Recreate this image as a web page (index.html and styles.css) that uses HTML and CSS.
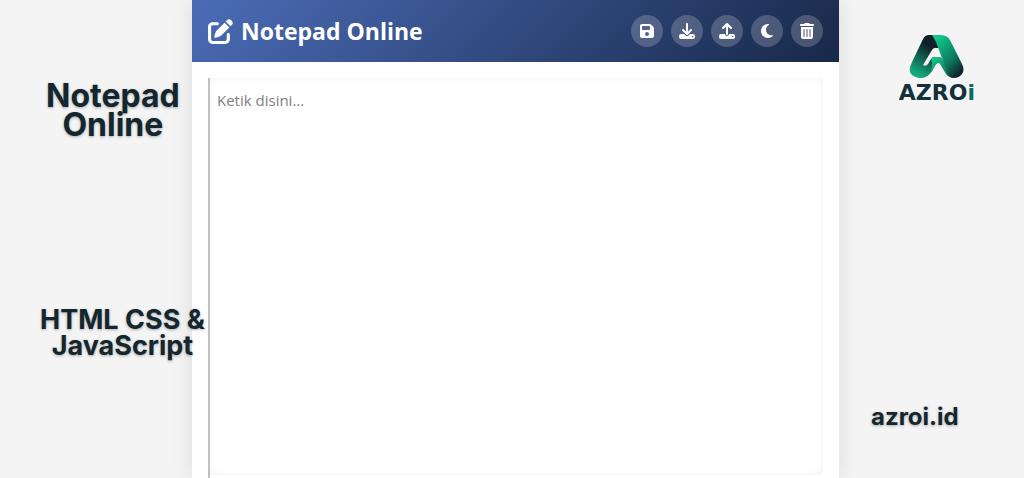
FILE: index.html
```html
<!DOCTYPE html>
<html lang="id">
  <head>
    <meta charset="UTF-8" />
    <meta name="viewport" content="width=device-width, initial-scale=1.0" />
    <title>Notepad Online</title>
    <link rel="stylesheet" href="styles.css">
  </head>
  <body>
    <aside class="side left">
      <p class="label name">Notepad<br>Online</p>
      <p class="label stack">HTML CSS &amp;<br>JavaScript</p>
    </aside>
    <main class="container">
      <header class="header">
        <h1 class="title">
          <svg class="title-icon" viewBox="0 0 512 512" aria-hidden="true"><path d="M471.6 21.7c-21.9-21.9-57.3-21.9-79.2 0L362.3 51.7l97.9 97.9 30.1-30.1c21.9-21.9 21.9-57.3 0-79.2L471.6 21.7zm-299.2 220c-6.1 6.1-10.8 13.6-13.5 21.9l-29.6 88.8c-2.9 8.6-.6 18.1 5.8 24.6s15.9 8.7 24.6 5.8l88.8-29.6c8.2-2.7 15.7-7.4 21.9-13.5L437.7 172.3 339.7 74.3 172.4 241.7zM96 64C43 64 0 107 0 160V416c0 53 43 96 96 96H352c53 0 96-43 96-96V320c0-17.7-14.3-32-32-32s-32 14.3-32 32v96c0 17.7-14.3 32-32 32H96c-17.7 0-32-14.3-32-32V160c0-17.7 14.3-32 32-32h96c17.7 0 32-14.3 32-32s-14.3-32-32-32H96z"/></svg>
          Notepad Online
        </h1>
        <div class="actions">
          <button class="btn" type="button" aria-label="Simpan">
            <svg viewBox="0 0 448 512"><path d="M64 32C28.7 32 0 60.7 0 96V416c0 35.3 28.7 64 64 64H384c35.3 0 64-28.7 64-64V173.3c0-17-6.7-33.3-18.7-45.3L352 50.7C340 38.7 323.7 32 306.7 32H64zm0 96c0-17.7 14.3-32 32-32H288c17.7 0 32 14.3 32 32v64c0 17.7-14.3 32-32 32H96c-17.7 0-32-14.3-32-32V128zM224 288a64 64 0 1 1 0 128 64 64 0 1 1 0-128z"/></svg>
          </button>
          <button class="btn" type="button" aria-label="Unduh">
            <svg viewBox="0 0 512 512"><path d="M288 32c0-17.7-14.3-32-32-32s-32 14.3-32 32V274.7l-73.4-73.4c-12.5-12.5-32.8-12.5-45.3 0s-12.5 32.8 0 45.3l128 128c12.5 12.5 32.8 12.5 45.3 0l128-128c12.5-12.5 12.5-32.8 0-45.3s-32.8-12.5-45.3 0L288 274.7V32zM64 352c-35.3 0-64 28.7-64 64v32c0 35.3 28.7 64 64 64H448c35.3 0 64-28.7 64-64V416c0-35.3-28.7-64-64-64H346.5l-45.3 45.3c-25 25-65.5 25-90.5 0L165.5 352H64zm368 56a24 24 0 1 1 0 48 24 24 0 1 1 0-48z"/></svg>
          </button>
          <button class="btn" type="button" aria-label="Unggah">
            <svg viewBox="0 0 512 512"><path d="M288 109.3V352c0 17.7-14.3 32-32 32s-32-14.3-32-32V109.3l-73.4 73.4c-12.5 12.5-32.8 12.5-45.3 0s-12.5-32.8 0-45.3l128-128c12.5-12.5 32.8-12.5 45.3 0l128 128c12.5 12.5 12.5 32.8 0 45.3s-32.8 12.5-45.3 0L288 109.3zM64 352H192c0 35.3 28.7 64 64 64s64-28.7 64-64H448c35.3 0 64 28.7 64 64v32c0 35.3-28.7 64-64 64H64c-35.3 0-64-28.7-64-64V416c0-35.3 28.7-64 64-64zM432 456a24 24 0 1 0 0-48 24 24 0 1 0 0 48z"/></svg>
          </button>
          <button class="btn" type="button" aria-label="Mode gelap">
            <svg viewBox="0 0 384 512"><path d="M223.5 32C100 32 0 132.3 0 256S100 480 223.5 480c60.6 0 115.5-24.2 155.8-63.4c5-4.9 6.3-12.5 3.1-18.7s-10.1-9.7-17-8.5c-9.8 1.7-19.8 2.6-30.1 2.6c-96.9 0-175.5-78.8-175.5-176c0-65.8 36-123.1 89.3-153.3c6.1-3.5 9.2-10.5 7.7-17.3s-7.3-11.9-14.3-12.5c-6.3-.5-12.6-.8-19-.8z"/></svg>
          </button>
          <button class="btn" type="button" aria-label="Hapus">
            <svg viewBox="0 0 448 512"><path d="M135.2 17.7C140.6 6.8 151.7 0 163.8 0H284.2c12.1 0 23.2 6.8 28.6 17.7L320 32h96c17.7 0 32 14.3 32 32s-14.3 32-32 32H32C14.3 96 0 81.7 0 64S14.3 32 32 32h96l7.2-14.3zM32 128H416V448c0 35.3-28.7 64-64 64H96c-35.3 0-64-28.7-64-64V128zm96 64c-8.8 0-16 7.2-16 16V432c0 8.8 7.2 16 16 16s16-7.2 16-16V208c0-8.8-7.2-16-16-16zm96 0c-8.8 0-16 7.2-16 16V432c0 8.8 7.2 16 16 16s16-7.2 16-16V208c0-8.8-7.2-16-16-16zm96 0c-8.8 0-16 7.2-16 16V432c0 8.8 7.2 16 16 16s16-7.2 16-16V208c0-8.8-7.2-16-16-16z"/></svg>
          </button>
        </div>
      </header>
      <div class="editor">
        <textarea class="note" placeholder="Ketik disini..." aria-label="Catatan"></textarea>
      </div>
    </main>
    <aside class="side right">
      <div class="logo">
        <svg class="logo-mark" viewBox="0 0 55 45" aria-hidden="true">
          <defs>
            <linearGradient id="leg" x1="0.7" y1="0" x2="0.2" y2="1">
              <stop offset="0.25" stop-color="#10202b"/>
              <stop offset="0.9" stop-color="#12a878"/>
            </linearGradient>
            <linearGradient id="band" x1="0.1" y1="0" x2="0.9" y2="1">
              <stop offset="0.1" stop-color="#13c587"/>
              <stop offset="0.6" stop-color="#0c7a60"/>
              <stop offset="0.95" stop-color="#0f1d28"/>
            </linearGradient>
            <linearGradient id="strip" x1="0" y1="0" x2="0.9" y2="1">
              <stop offset="0.1" stop-color="#13c587"/>
              <stop offset="1" stop-color="#0d5b50"/>
            </linearGradient>
          </defs>
          <!-- left leg with its hook -->
          <path fill="url(#leg)" d="M20 1H29L34 14H26Q24 14 23 16L14 31Q17 33 19 30L22 25Q23 23 26 23L28 28L23 37Q18 45 10 44Q-1 42 1 33L3 28L14 5Q16 1 20 1Z"/>
          <!-- inner strip -->
          <path fill="url(#strip)" d="M26 23H32L45 44Q40 44 37 40L31 30Q29 27 25 33L22 38Q24 28 22 25Q23 23 26 23Z"/>
          <!-- right band -->
          <path fill="url(#band)" d="M23 1H31Q38 1 41 6L53 30Q56 36 53 40Q50 44 45 44Q41 44 39 40L30 16Q28 8 23 1Z"/>
        </svg>
        <span class="logo-text">AZRO<span class="logo-dot">i</span></span>
      </div>
      <a class="label site" href="#">azroi.id</a>
    </aside>
  </body>
</html>
```
FILE: styles.css
```css
* {
  box-sizing: border-box;
  margin: 0;
}

body {
  display: grid;
  grid-template-columns: minmax(0, 192fr) minmax(0, 647fr) minmax(0, 185fr);
  height: 100vh;
  overflow: hidden;
  background-color: #f4f4f4;
  font-family: "Open Sans", "Noto Sans", sans-serif;
}

.side {
  display: flex;
  flex-direction: column;
}

.left {
  z-index: 1;
  gap: 168px;
  padding-top: 81px;
  padding-left: 40px;
  align-items: flex-start;
}

.label {
  font-family: Inter, sans-serif;
  font-weight: 700;
  color: #14262e;
  text-align: center;
  text-shadow: 0 1px 3px rgba(0, 0, 0, 0.3);
  text-decoration: none;
  white-space: nowrap;
}

.name {
  padding-left: 6px;
  font-size: 32px;
  line-height: 29px;
}

.stack {
  font-size: 27px;
  line-height: 26px;
}

.container {
  display: flex;
  flex-direction: column;
  background-color: #fff;
  box-shadow: 0 0 20px rgba(0, 0, 0, 0.1);
}

.header {
  display: flex;
  align-items: center;
  justify-content: space-between;
  height: 62px;
  padding: 0 16px;
  background: linear-gradient(135deg, #4b6cb7, #182848);
  color: #fff;
}

.title {
  display: flex;
  align-items: center;
  gap: 8px;
  font-size: 23px;
  font-weight: 700;
}

.title-icon {
  width: 25px;
  height: 25px;
  fill: #fff;
}

.actions {
  display: flex;
  gap: 8px;
}

.btn {
  display: flex;
  align-items: center;
  justify-content: center;
  width: 32px;
  height: 32px;
  padding: 0;
  border: none;
  border-radius: 50%;
  background-color: rgba(255, 255, 255, 0.2);
  cursor: pointer;
}

.btn:hover {
  background-color: rgba(255, 255, 255, 0.3);
}

.btn svg {
  height: 16px;
  fill: #fff;
}

.editor {
  flex: 1;
  display: flex;
  margin: 16px 16px 0;
  padding-bottom: 3px;
  border-left: 2px solid #c1c1c1;
}

.note {
  flex: 1;
  padding: 10px 7px;
  border: none;
  border-radius: 0 4px 4px 0;
  outline: none;
  resize: none;
  background-color: #fff;
  box-shadow: inset 0 0 8px rgba(0, 0, 0, 0.05);
  font-family: inherit;
  font-size: 15px;
  line-height: 24px;
}

.note::placeholder {
  color: #808080;
}

.right {
  justify-content: space-between;
  padding: 34px 49px 47px 32px;
}

.logo {
  display: flex;
  flex-direction: column;
  align-items: center;
  align-self: flex-end;
  gap: 4px;
}

.logo-mark {
  width: 55px;
  height: 45px;
}

.logo-text {
  font-family: "DejaVu Sans", sans-serif;
  font-size: 22px;
  font-weight: 700;
  line-height: 20px;
  color: #14303a;
}

.logo-dot {
  color: #0e6b5a;
}

.site {
  align-self: flex-start;
  font-size: 24px;
  line-height: 28px;
}
```
